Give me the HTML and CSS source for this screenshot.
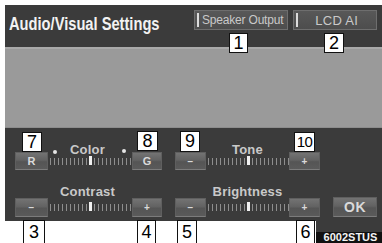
FILE: index.html
```html
<!DOCTYPE html>
<html>
<head>
<meta charset="utf-8">
<link rel="stylesheet" href="styles.css">
</head>
<body>
<div class="page">
  <div class="screen">
    <div class="header">
      <div class="title">Audio/Visual Settings</div>
      <div class="tabs">
        <div class="tab tab-speaker"><span class="ind"></span><span class="tab-text">Speaker Output</span></div>
        <div class="tab tab-lcd"><span class="ind"></span><span class="tab-text">LCD AI</span></div>
      </div>
    </div>
    <div class="display"></div>
    <div class="controls">
      <div class="ctl ctl-left">
        <div class="lbl">Color</div>
        <div class="row">
          <div class="btn">R</div>
          <div class="slider"><span class="mark"></span></div>
          <div class="btn btn-narrow">G</div>
        </div>
        <span class="dot dot-l"></span>
        <span class="dot dot-r"></span>
      </div>
      <div class="ctl ctl-right">
        <div class="lbl">Tone</div>
        <div class="row">
          <div class="btn btn-sym">−</div>
          <div class="slider"><span class="mark"></span></div>
          <div class="btn btn-sym">+</div>
        </div>
      </div>
      <div class="spacer"></div>
      <div class="ctl ctl-left row2">
        <div class="lbl">Contrast</div>
        <div class="row">
          <div class="btn btn-sym">−</div>
          <div class="slider"><span class="mark"></span></div>
          <div class="btn btn-narrow btn-sym">+</div>
        </div>
      </div>
      <div class="ctl ctl-right row2">
        <div class="lbl">Brightness</div>
        <div class="row">
          <div class="btn btn-sym">−</div>
          <div class="slider"><span class="mark"></span></div>
          <div class="btn btn-sym">+</div>
        </div>
      </div>
      <div class="ok-cell">
        <div class="btn ok">OK</div>
      </div>
    </div>
  </div>
  <div class="code"><span class="code-text">6002STUS</span></div>

  <div class="callout c1">1</div>
  <div class="callout c2">2</div>
  <div class="callout c7">7</div>
  <div class="callout c8">8</div>
  <div class="callout c9">9</div>
  <div class="callout c10">10</div>
  <div class="callout c3">3</div>
  <div class="callout c4">4</div>
  <div class="callout c5">5</div>
  <div class="callout c6">6</div>
</div>
</body>
</html>
```

FILE: styles.css
```css
* { box-sizing: border-box; }
html, body { margin: 0; padding: 0; background: #ffffff; }
body { width: 382px; height: 243px; overflow: hidden; font-family: "Liberation Sans", Arial, sans-serif; }

.page { position: relative; width: 382px; height: 243px; padding: 5px 0 0 5px; }

.screen {
  width: 377px;
  height: 216px;
  background: #3b3b3b;
  display: flex;
  flex-direction: column;
}

.header {
  height: 42px;
  display: flex;
  align-items: flex-start;
  padding: 0 6px 0 4px;
}
.title {
  padding-top: 9px;
  font-size: 18px;
  line-height: 20px;
  font-weight: bold;
  color: #f2f2f2;
  white-space: nowrap;
  transform: scaleX(0.815);
  transform-origin: left top;
}
.tabs {
  margin-left: auto;
  margin-top: 5px;
  display: flex;
  gap: 5px;
}
.tab {
  height: 20px;
  background: linear-gradient(#585858, #4d4d4d);
  border: 1px solid #6e6e6e;
  display: flex;
  align-items: center;
  padding-left: 2px;
  color: #c9c9c9;
  font-size: 12px;
}
.tab-speaker { width: 94px; }
.tab-lcd { width: 84px; }
.ind { width: 2px; height: 14px; background: #dcdcdc; flex: none; }
.tab-text { flex: 1; text-align: center; white-space: nowrap; }
.tab-speaker .tab-text { letter-spacing: -0.2px; }
.tab-lcd .tab-text { font-size: 13px; letter-spacing: 0.3px; }

.display {
  height: 81px;
  background: #9a9a9a;
  border-top: 2px solid #a9a9a9;
  border-bottom: 1px solid #8c8c8c;
}

.controls {
  flex: 1;
  display: grid;
  grid-template-columns: 147px 145px 44px;
  grid-template-rows: 30px 31px;
  column-gap: 13px;
  row-gap: 12px;
  padding: 16px 0 0 10px;
}
.controls .ctl-right { grid-column: 2; }
.spacer { grid-column: 3; }
.ctl { position: relative; display: flex; flex-direction: column; }
.lbl {
  height: 12px;
  line-height: 12px;
  margin-bottom: -4px;
  text-align: center;
  font-size: 13px;
  font-weight: bold;
  color: #c9c9c9;
  letter-spacing: 0.2px;
  white-space: nowrap;
}
.ctl-left .lbl { padding-right: 2px; }
.row2 .lbl { margin-bottom: 0; }
.row { display: flex; align-items: center; height: 18px; }
.row2 .row { height: 19px; }

.btn {
  width: 33px;
  height: 100%;
  flex: none;
  background: linear-gradient(#737373, #626262 45%, #555555 55%, #5a5a5a);
  border: 1px solid #5f5f5f;
  border-bottom-color: #7c7c7c;
  color: #dadada;
  font-size: 11px;
  font-weight: bold;
  display: flex;
  align-items: center;
  justify-content: center;
}
.ctl-right .btn { width: 31px; }
.btn-narrow { width: 30px; }
.btn-sym { font-size: 10px; }

.slider {
  flex: 1;
  height: 7px;
  position: relative;
  background: repeating-linear-gradient(90deg, transparent 0 2px, #8e8e8e 2px 3px, transparent 3px 4px);
}
.mark {
  position: absolute;
  left: 50%;
  top: -2px;
  width: 3px;
  height: 9px;
  margin-left: -1px;
  background: #f0f0f0;
}

.dot {
  position: absolute;
  width: 4px;
  height: 4px;
  border-radius: 50%;
  background: #e6e6e6;
}
.dot-l { left: 38px; top: 6px; }
.dot-r { left: 107px; top: 5px; }

.ok-cell { grid-column: 3; display: flex; flex-direction: column; justify-content: flex-end; }
.ok {
  width: 44px;
  height: 20px;
  font-size: 14px;
  letter-spacing: 0.5px;
}

.code {
  position: absolute;
  left: 316px;
  top: 221px;
  width: 66px;
  height: 22px;
  background: #3b3b3b;
  display: flex;
  flex-direction: column;
  justify-content: flex-end;
}
.code-text {
  display: block;
  height: 11px;
  background: #111111;
  color: #f4f4f4;
  font-size: 11px;
  line-height: 11px;
  font-weight: bold;
  text-align: center;
  padding-left: 3px;
}

.callout {
  position: absolute;
  width: 20px;
  height: 20px;
  background: #ffffff;
  border: 1px solid #111111;
  color: #000000;
  font-size: 18px;
  line-height: 18px;
  text-align: center;
  white-space: nowrap;
}
.c1 { left: 229px; top: 33px; width: 19px; }
.c2 { left: 324px; top: 33px; }
.c7 { left: 22px; top: 132px; }
.c8 { left: 137px; top: 131px; width: 21px; }
.c9 { left: 180px; top: 131px; height: 21px; }
.c10 { left: 294px; top: 132px; width: 21px; font-size: 15px; letter-spacing: -0.5px; }
.c3 { left: 23px; top: 220px; width: 22px; height: 24px; line-height: 22px; }
.c4 { left: 137px; top: 220px; width: 19px; height: 24px; line-height: 22px; }
.c5 { left: 177px; top: 220px; height: 24px; line-height: 22px; }
.c6 { left: 296px; top: 220px; width: 19px; height: 24px; line-height: 22px; }
```
